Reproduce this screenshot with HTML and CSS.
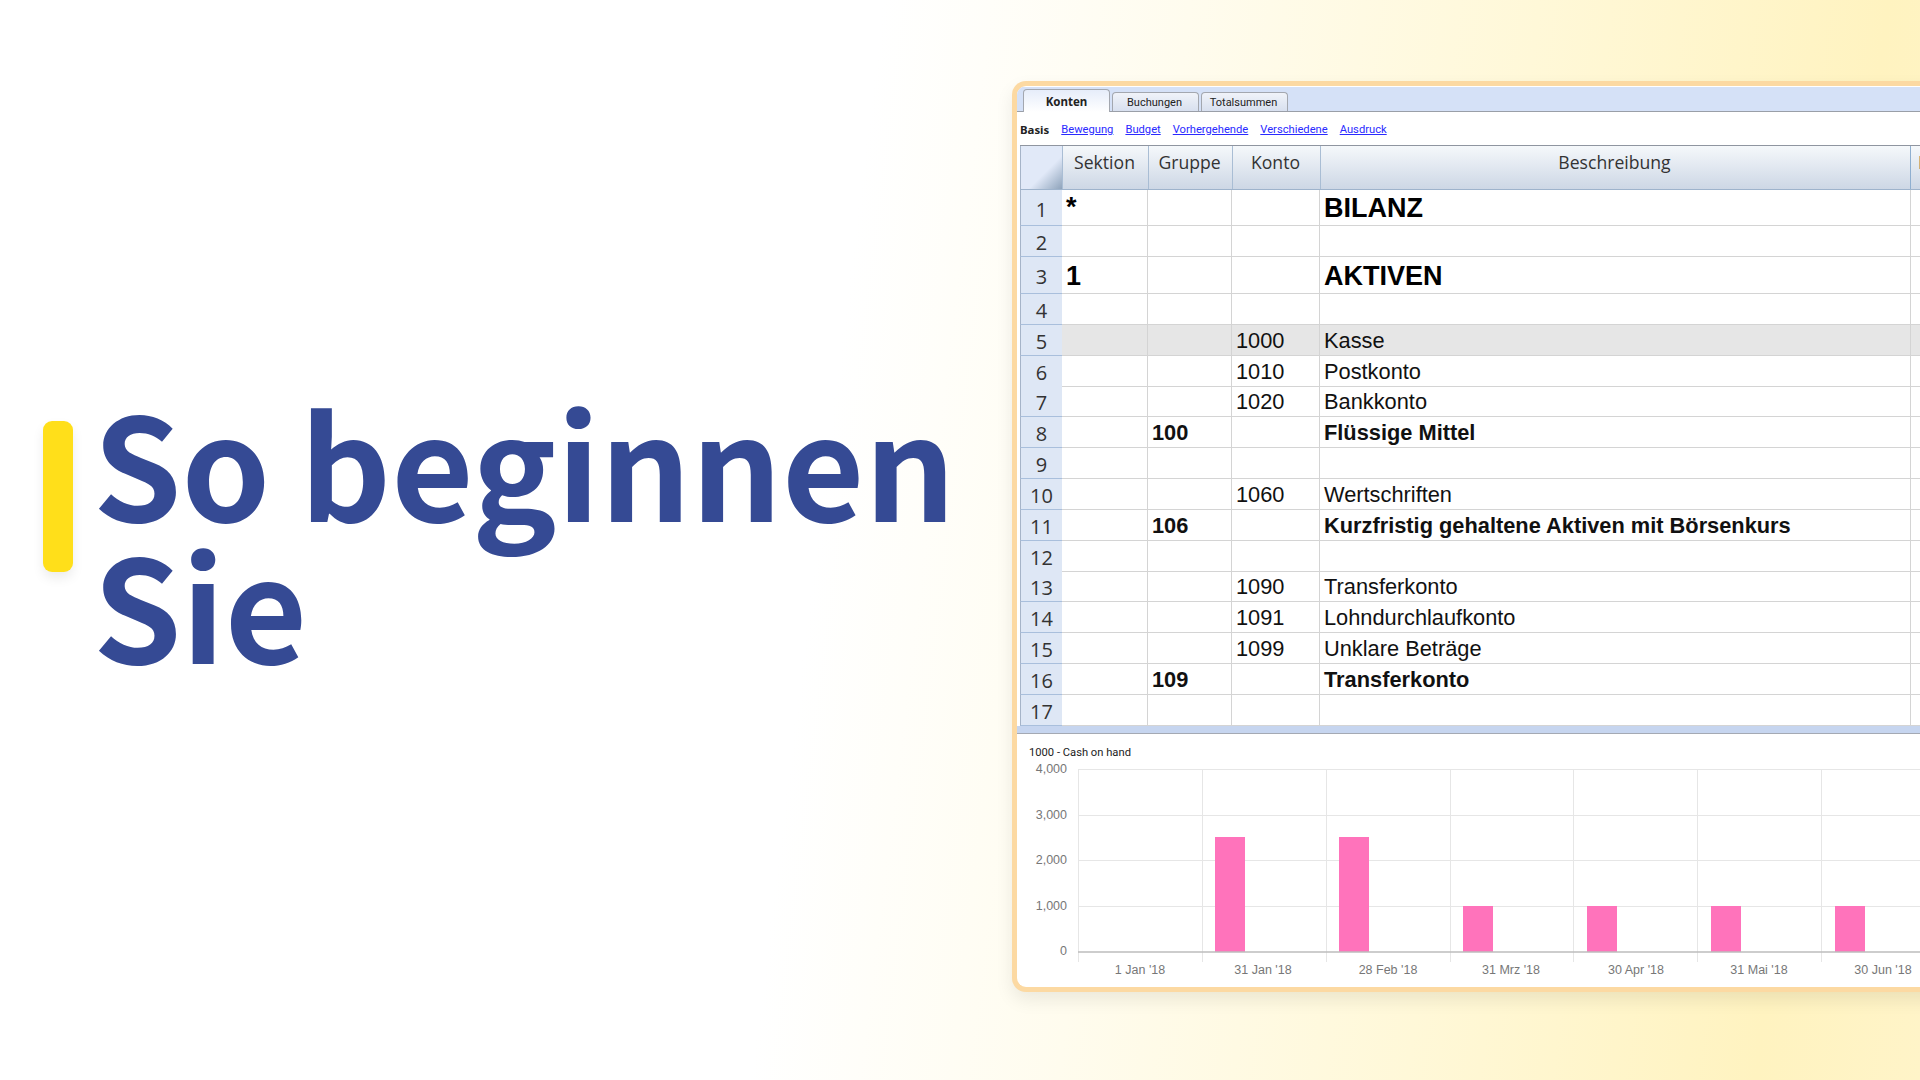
FILE: index.html
```html
<!DOCTYPE html>
<html lang="de">

<head>
    <meta charset="UTF-8">
    <title>So beginnen Sie</title>
    <link rel="stylesheet" href="styles.css">
</head>

<body>
    <div class="page">
        <section class="hero">
            <div class="hero-bar"></div>
            <h1 class="hero-title">So beginnen<br>Sie</h1>
        </section>

        <section class="card">
            <div class="tabs">
                <div class="tab tab-active">Konten</div>
                <div class="tab">Buchungen</div>
                <div class="tab">Totalsummen</div>
            </div>

            <div class="views">
                <b>Basis</b>
                <a href="#">Bewegung</a>
                <a href="#">Budget</a>
                <a href="#">Vorhergehende</a>
                <a href="#">Verschiedene</a>
                <a href="#">Ausdruck</a>
            </div>

            <div class="sheet">
                <div class="row row-head">
                    <div class="corner"></div>
                    <div class="head">Sektion</div>
                    <div class="head">Gruppe</div>
                    <div class="head">Konto</div>
                    <div class="head">Beschreibung</div>
                    <div class="head head-cut">BClass</div>
                </div>
                <div class="row row-tall row-first">
                    <div class="num">1</div>
                    <div class="cell cell-big cell-star">*</div>
                    <div class="cell"></div>
                    <div class="cell"></div>
                    <div class="cell cell-big">BILANZ</div>
                    <div class="cell"></div>
                </div>
                <div class="row">
                    <div class="num">2</div>
                    <div class="cell"></div>
                    <div class="cell"></div>
                    <div class="cell"></div>
                    <div class="cell"></div>
                    <div class="cell"></div>
                </div>
                <div class="row row-tall row-third">
                    <div class="num">3</div>
                    <div class="cell cell-big">1</div>
                    <div class="cell"></div>
                    <div class="cell"></div>
                    <div class="cell cell-big">AKTIVEN</div>
                    <div class="cell"></div>
                </div>
                <div class="row">
                    <div class="num">4</div>
                    <div class="cell"></div>
                    <div class="cell"></div>
                    <div class="cell"></div>
                    <div class="cell"></div>
                    <div class="cell"></div>
                </div>
                <div class="row row-selected">
                    <div class="num">5</div>
                    <div class="cell"></div>
                    <div class="cell"></div>
                    <div class="cell">1000</div>
                    <div class="cell">Kasse</div>
                    <div class="cell"></div>
                </div>
                <div class="row">
                    <div class="num">6</div>
                    <div class="cell"></div>
                    <div class="cell"></div>
                    <div class="cell">1010</div>
                    <div class="cell">Postkonto</div>
                    <div class="cell"></div>
                </div>
                <div class="row">
                    <div class="num">7</div>
                    <div class="cell"></div>
                    <div class="cell"></div>
                    <div class="cell">1020</div>
                    <div class="cell">Bankkonto</div>
                    <div class="cell"></div>
                </div>
                <div class="row">
                    <div class="num">8</div>
                    <div class="cell"></div>
                    <div class="cell cell-bold">100</div>
                    <div class="cell"></div>
                    <div class="cell cell-bold">Flüssige Mittel</div>
                    <div class="cell"></div>
                </div>
                <div class="row">
                    <div class="num">9</div>
                    <div class="cell"></div>
                    <div class="cell"></div>
                    <div class="cell"></div>
                    <div class="cell"></div>
                    <div class="cell"></div>
                </div>
                <div class="row">
                    <div class="num">10</div>
                    <div class="cell"></div>
                    <div class="cell"></div>
                    <div class="cell">1060</div>
                    <div class="cell">Wertschriften</div>
                    <div class="cell"></div>
                </div>
                <div class="row">
                    <div class="num">11</div>
                    <div class="cell"></div>
                    <div class="cell cell-bold">106</div>
                    <div class="cell"></div>
                    <div class="cell cell-bold">Kurzfristig gehaltene Aktiven mit Börsenkurs</div>
                    <div class="cell"></div>
                </div>
                <div class="row">
                    <div class="num">12</div>
                    <div class="cell"></div>
                    <div class="cell"></div>
                    <div class="cell"></div>
                    <div class="cell"></div>
                    <div class="cell"></div>
                </div>
                <div class="row">
                    <div class="num">13</div>
                    <div class="cell"></div>
                    <div class="cell"></div>
                    <div class="cell">1090</div>
                    <div class="cell">Transferkonto</div>
                    <div class="cell"></div>
                </div>
                <div class="row">
                    <div class="num">14</div>
                    <div class="cell"></div>
                    <div class="cell"></div>
                    <div class="cell">1091</div>
                    <div class="cell">Lohndurchlaufkonto</div>
                    <div class="cell"></div>
                </div>
                <div class="row">
                    <div class="num">15</div>
                    <div class="cell"></div>
                    <div class="cell"></div>
                    <div class="cell">1099</div>
                    <div class="cell">Unklare Beträge</div>
                    <div class="cell"></div>
                </div>
                <div class="row">
                    <div class="num">16</div>
                    <div class="cell"></div>
                    <div class="cell cell-bold">109</div>
                    <div class="cell"></div>
                    <div class="cell cell-bold">Transferkonto</div>
                    <div class="cell"></div>
                </div>
                <div class="row row-last">
                    <div class="num">17</div>
                    <div class="cell"></div>
                    <div class="cell"></div>
                    <div class="cell"></div>
                    <div class="cell"></div>
                    <div class="cell"></div>
                </div>
            </div>

            <div class="splitter"></div>

            <div class="chart">
                <svg class="chart-svg" width="995" height="253" viewBox="0 0 995 253">
                    <text class="chart-title" x="12" y="22">1000 - Cash on hand</text>

                    <g class="grid">
                        <line x1="61" x2="995" y1="35.5" y2="35.5" />
                        <line x1="61" x2="995" y1="81.5" y2="81.5" />
                        <line x1="61" x2="995" y1="126.5" y2="126.5" />
                        <line x1="61" x2="995" y1="172.5" y2="172.5" />
                        <line x1="61.5" x2="61.5" y1="35" y2="228" />
                        <line x1="185.5" x2="185.5" y1="35" y2="228" />
                        <line x1="309.5" x2="309.5" y1="35" y2="228" />
                        <line x1="433.5" x2="433.5" y1="35" y2="228" />
                        <line x1="556.5" x2="556.5" y1="35" y2="228" />
                        <line x1="680.5" x2="680.5" y1="35" y2="228" />
                        <line x1="804.5" x2="804.5" y1="35" y2="228" />
                    </g>

                    <g class="bars">
                        <rect x="198" y="103" width="30" height="115" />
                        <rect x="322" y="103" width="30" height="115" />
                        <rect x="446" y="172" width="30" height="46" />
                        <rect x="570" y="172" width="30" height="46" />
                        <rect x="694" y="172" width="30" height="46" />
                        <rect x="818" y="172" width="30" height="46" />
                    </g>

                    <line class="axis" x1="61" x2="995" y1="218" y2="218" />

                    <g class="y-labels">
                        <text x="50" y="39">4,000</text>
                        <text x="50" y="85">3,000</text>
                        <text x="50" y="130">2,000</text>
                        <text x="50" y="176">1,000</text>
                        <text x="50" y="221">0</text>
                    </g>

                    <g class="x-labels">
                        <text x="123" y="240">1 Jan '18</text>
                        <text x="246" y="240">31 Jan '18</text>
                        <text x="371" y="240">28 Feb '18</text>
                        <text x="494" y="240">31 Mrz '18</text>
                        <text x="619" y="240">30 Apr '18</text>
                        <text x="742" y="240">31 Mai '18</text>
                        <text x="866" y="240">30 Jun '18</text>
                    </g>
                </svg>
            </div>
        </section>
    </div>
</body>

</html>
```

FILE: styles.css
```css
html, body {
    margin: 0;
    padding: 0;
}

.page {
    width: 1920px;
    height: 1080px;
    overflow: hidden;
    display: flex;
    background: linear-gradient(97deg, #ffffff 43%, #fffcee 58%, #fff8d8 75%, #fff3c0 92%, #fff4c8 100%);
}

/* left side */
.hero {
    width: 1012px;
    flex: none;
    display: flex;
    box-sizing: border-box;
    padding: 421px 0 0 43px;
}

.hero-bar {
    width: 30px;
    height: 151px;
    flex: none;
    border-radius: 9px;
    background: #ffdf1a;
    box-shadow: 0 6px 12px rgba(0, 0, 0, 0.08);
}

.hero-title {
    margin: -32px 0 0 20px;
    font-family: "Noto Sans CJK SC", "Noto Sans", sans-serif;
    font-size: 142px;
    font-weight: 700;
    line-height: 142px;
    word-spacing: -3px;
    color: #354a94;
    white-space: nowrap;
}

/* application window */
.card {
    width: 1000px;
    height: 911px;
    flex: none;
    margin-top: 81px;
    box-sizing: border-box;
    border: 5px solid #fcd9a2;
    border-right: 0;
    border-radius: 14px 0 0 14px;
    overflow: hidden;
    background: #ffffff;
    box-shadow: 0 8px 18px rgba(0, 0, 0, 0.08);
}

.tabs {
    height: 25px;
    margin-top: 1px;
    box-sizing: border-box;
    padding-left: 6px;
    display: flex;
    align-items: flex-end;
    gap: 2px;
    background: #d5e1f7;
    border-bottom: 1px solid #9a9fa8;
}

.tab {
    width: 87px;
    height: 19px;
    box-sizing: border-box;
    padding-right: 2px;
    text-align: center;
    font-family: Roboto, "Noto Sans", sans-serif;
    font-size: 11px;
    line-height: 20px;
    color: #222222;
    border: 1px solid #a3a7af;
    border-bottom: 0;
    border-radius: 4px 4px 0 0;
    background: linear-gradient(#f0f3f9, #d8e0ef);
}

.tab-active {
    height: 23px;
    position: relative;
    top: 1px;
    padding-right: 0;
    font-family: "Noto Sans", sans-serif;
    font-size: 11.5px;
    font-weight: 700;
    line-height: 23px;
    background: linear-gradient(#e6edfa, #ffffff);
}

.views {
    height: 33px;
    box-sizing: border-box;
    padding: 2px 0 0 3px;
    display: flex;
    align-items: center;
    gap: 12px;
    font-family: Roboto, "Noto Sans", sans-serif;
    font-size: 11.2px;
}

.views b {
    font-family: "Noto Sans", sans-serif;
    font-size: 11.4px;
    color: #222222;
}

.views a {
    color: #2a2aff;
}

/* table */
.sheet {
    margin-left: 3px;
    border-bottom: 1px solid #9a9a9a;
}

.row {
    height: 30.85px;
    box-sizing: border-box;
    display: grid;
    grid-template-columns: 42px 86px 84px 88px 591px 1fr;
    font-family: "Liberation Sans", Arial, sans-serif;
    font-size: 21.8px;
    color: #111111;
}

.row-head {
    height: 45px;
    border-top: 1px solid #8f95a0;
    border-bottom: 1px solid #9eb3cc;
    background: linear-gradient(#f5f8fb, #cdd7e5);
}

.row-tall {
    height: 37px;
}

.row-first {
    height: 36px;
}

.row-last {
    height: 30px;
}

.row-selected {
    background: #e6e6e6;
}

.corner {
    border-left: 1px solid #a6b4c8;
    background: linear-gradient(135deg, #e1e9f8 60%, #8ea3bb 100%);
}

.head {
    padding-right: 2px;
    border-left: 1px solid #a9bdd4;
    text-align: center;
    font-family: "Open Sans", sans-serif;
    font-size: 17.6px;
    line-height: 33px;
    color: #333333;
}

.head:nth-child(5) {
    border-right: 1px solid #8fafd0;
}

.head-cut {
    border-left: 0;
    text-align: left;
    padding: 0 0 0 7px;
    overflow: hidden;
    white-space: nowrap;
}

.num {
    box-sizing: border-box;
    padding-top: 3px;
    border-left: 1px solid #a6b4c8;
    border-bottom: 1px solid #a9bfdc;
    background: #dee7f5;
    text-align: center;
    font-family: "Open Sans", sans-serif;
    font-size: 20px;
    line-height: 27px;
    color: #333333;
}

.row-tall .num {
    padding-top: 6px;
}

.cell {
    box-sizing: border-box;
    padding: 1px 0 0 4px;
    border-right: 1px solid #d4d4d4;
    border-bottom: 1px solid #d4d4d4;
    line-height: 29px;
    white-space: nowrap;
}

.cell-bold {
    font-weight: 700;
}

.cell-big {
    padding-top: 1px;
    font-size: 27px;
    font-weight: 700;
    line-height: 34px;
    color: #000000;
}

.row-third .cell-big {
    padding-top: 2px;
}

.cell-star {
    padding-top: 4px;
    line-height: 27px;
}

.splitter {
    height: 8px;
    border-bottom: 1px solid #a4a9b3;
    box-sizing: border-box;
    background: #c6d5ef;
}

/* chart */
.chart-svg {
    display: block;
}

.chart-title {
    font-family: Roboto, "Noto Sans", sans-serif;
    font-size: 11.2px;
    fill: #222222;
}

.grid line {
    stroke: #e6e6e6;
    stroke-width: 1;
}

.bars rect {
    fill: #ff73bb;
}

.axis {
    stroke: #bdbdbd;
    stroke-width: 1.5;
}

.y-labels text,
.x-labels text {
    font-family: "Liberation Sans", Arial, sans-serif;
    font-size: 12.5px;
    fill: #777777;
}

.y-labels text {
    text-anchor: end;
}

.x-labels text {
    text-anchor: middle;
}
```
